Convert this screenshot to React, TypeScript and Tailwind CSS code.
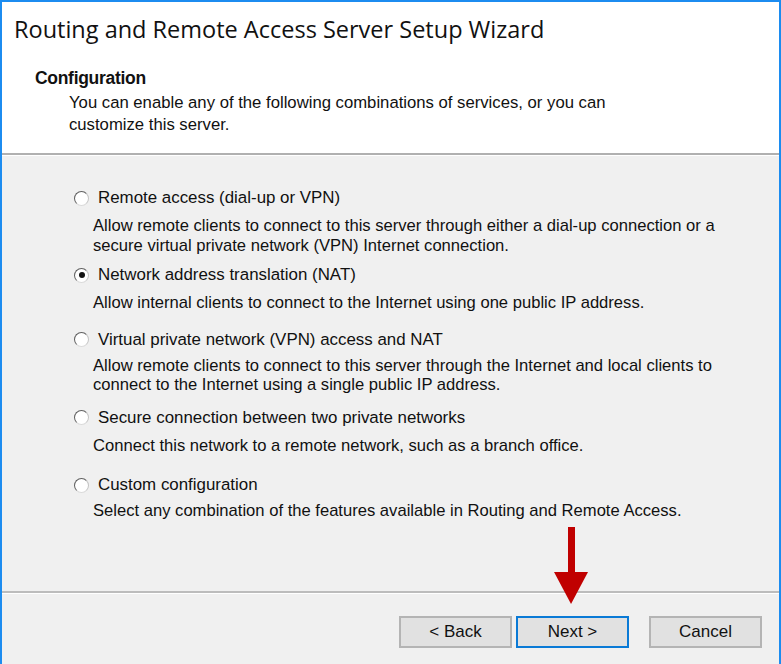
import React from 'react';

interface OptionProps {
  label: string;
  lines: string[];
  checked?: boolean;
  mt: string;
  descMt: string;
}

function Radio({ checked }: { checked?: boolean }) {
  return (
    <span className="relative flex h-[15px] w-[15px] shrink-0 items-center justify-center rounded-full border-[1.5px] border-t-[#5f5f5f] border-l-[#5f5f5f] border-r-[#c4c4c4] border-b-[#dadada] bg-white">
      {checked && <span className="h-[6px] w-[6px] rounded-full bg-[#111]" />}
    </span>
  );
}

function Option({ label, lines, checked, mt, descMt }: OptionProps) {
  return (
    <div className={mt}>
      <div className="flex h-[20px] items-center">
        <span className="ml-[72px]">
          <Radio checked={checked} />
        </span>
        <span className="ml-[9px] text-[16.9px] leading-[20px] text-[#111]">{label}</span>
      </div>
      <div className={`${descMt} ml-[91px] text-[16.6px] leading-[19.5px] text-[#111]`}>
        {lines.map((l) => (
          <div key={l}>{l}</div>
        ))}
      </div>
    </div>
  );
}

function WizButton({ children, primary }: { children: React.ReactNode; primary?: boolean }) {
  return (
    <button
      type="button"
      className={`h-[32px] w-[113px] border-2 bg-[#e1e1e1] text-[17px] text-[#111] ${
        primary ? 'border-[#0a7ad6]' : 'border-[#b4b4b4]'
      }`}
    >
      {children}
    </button>
  );
}

export default function App() {
  return (
    <div
      className="relative flex h-[664px] w-[781px] flex-col overflow-hidden border-x-2 border-t-2 border-[#1c8cf0] bg-[#f0f0f0]"
      style={{ fontFamily: '"Liberation Sans", Arial, sans-serif' }}
    >
      {/* header */}
      <div className="h-[151px] shrink-0 bg-white">
        <div
          className="ml-[12px] mt-[11px] text-[23.5px] leading-[32px] text-[#111]"
          style={{ fontFamily: '"Open Sans", sans-serif' }}
        >
          Routing and Remote Access Server Setup Wizard
        </div>
        <div className="ml-[33px] mt-[23px] text-[17.5px] font-bold leading-[20px] tracking-[-0.3px] text-[#111]">
          Configuration
        </div>
        <div className="ml-[67px] mt-[4px] text-[16.7px] leading-[22px] text-[#111]">
          <div>You can enable any of the following combinations of services, or you can</div>
          <div>customize this server.</div>
        </div>
      </div>
      <div className="h-[2px] shrink-0 bg-[#b0b0b0]" />
      <div className="h-px shrink-0 bg-white" />

      {/* options */}
      <div className="flex flex-col pt-[32px]">
        <Option
          mt="mt-0"
          descMt="mt-[8px]"
          label="Remote access (dial-up or VPN)"
          lines={[
            'Allow remote clients to connect to this server through either a dial-up connection or a',
            'secure virtual private network (VPN) Internet connection.',
          ]}
        />
        <Option
          mt="mt-[10px]"
          descMt="mt-[8px]"
          checked
          label="Network address translation (NAT)"
          lines={['Allow internal clients to connect to the Internet using one public IP address.']}
        />
        <Option
          mt="mt-[17px]"
          descMt="mt-[6px]"
          label="Virtual private network (VPN) access and NAT"
          lines={[
            'Allow remote clients to connect to this server through the Internet and local clients to',
            'connect to the Internet using a single public IP address.',
          ]}
        />
        <Option
          mt="mt-[13px]"
          descMt="mt-[8px]"
          label="Secure connection between two private networks"
          lines={['Connect this network to a remote network, such as a branch office.']}
        />
        <Option
          mt="mt-[20px]"
          descMt="mt-[6px]"
          label="Custom configuration"
          lines={['Select any combination of the features available in Routing and Remote Access.']}
        />
      </div>

      {/* footer */}
      <div className="mt-auto">
        <div className="h-[2px] bg-[#bcbcbc]" />
        <div className="h-px bg-white" />
        <div className="flex h-[70px] items-start pt-[22px] pl-[397px]">
          <WizButton>&lt; Back</WizButton>
          <span className="ml-[4px]">
            <WizButton primary>Next &gt;</WizButton>
          </span>
          <span className="ml-[20px]">
            <WizButton>Cancel</WizButton>
          </span>
        </div>
      </div>

      {/* red arrow annotation */}
      <svg className="absolute left-[552px] top-[525px]" width="36" height="80" viewBox="0 0 36 80">
        <rect x="14" y="0" width="7" height="46" fill="#c00000" />
        <polygon points="0,45 34,45 17,77" fill="#c00000" />
      </svg>
    </div>
  );
}
